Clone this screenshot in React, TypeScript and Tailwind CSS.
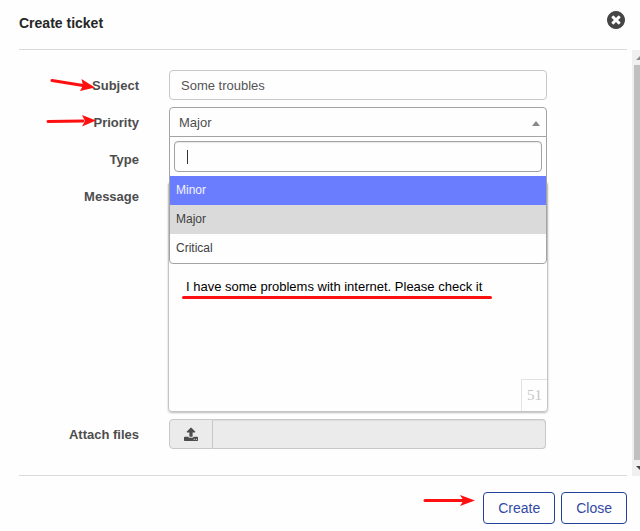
import React, { useState } from "react";

const fieldRow = "relative grid grid-cols-[120px_minmax(0,1fr)] gap-x-[30px]";
const fieldLabel = "pt-[6px] text-right text-[13px] leading-5 font-bold text-[#4d4d4d]";

function CloseIcon() {
  return (
    <svg viewBox="0 0 1536 1536" className="size-[18px] fill-[#454545]" aria-hidden="true">
      <path d="M1149 994q0-26-19-45L949 768l181-181q19-19 19-45 0-27-19-46l-90-90q-19-19-46-19-26 0-45 19L768 587 587 406q-19-19-45-19-27 0-46 19l-90 90q-19 19-19 46 0 26 19 45l181 181-181 181q-19 19-19 45 0 27 19 46l90 90q19 19 46 19 26 0 45-19l181-181 181 181q19 19 45 19 27 0 46-19l90-90q19-19 19-46zm387-226q0 209-103 385.500T1153.500 1433 768 1536t-385.500-103T103 1153.500 0 768t103-385.500T382.500 103 768 0t385.500 103T1433 382.500 1536 768z" />
    </svg>
  );
}

function UploadIcon() {
  return (
    <svg viewBox="0 0 1664 1664" className="size-[14px] fill-[#4d4d4d]" aria-hidden="true">
      <path d="M1280 1472q0-26-19-45t-45-19-45 19-19 45 19 45 45 19 45-19 19-45zm256 0q0-26-19-45t-45-19-45 19-19 45 19 45 45 19 45-19 19-45zm128-224v320q0 40-28 68t-68 28h-1472q-40 0-68-28t-28-68v-320q0-40 28-68t68-28h427q21 56 70.500 92t110.500 36h256q61 0 110.500-36t70.500-92h427q40 0 68 28t28 68zm-325-648q-17 40-59 40h-256v448q0 26-19 45t-45 19h-256q-26 0-45-19t-19-45v-448h-256q-42 0-59-40-17-39 14-69l448-448q18-19 45-19t45 19l448 448q31 30 14 69z" />
    </svg>
  );
}

/* Red pointer used to call out a control. */
function Arrow({ line, head, className }: { line: string; head: string; className: string }) {
  return (
    <svg width="56" height="20" viewBox="0 0 56 20" className={className} aria-hidden="true">
      <path d={line} stroke="#ff1010" strokeWidth="3" strokeLinecap="round" fill="none" />
      <path d={head} fill="#ff1010" />
    </svg>
  );
}

function PrioritySelect() {
  const [query, setQuery] = useState("");
  return (
    <div className="relative">
      <button
        type="button"
        id="priority"
        role="combobox"
        aria-expanded="true"
        aria-controls="priority-list"
        className="flex h-[30px] w-full items-center justify-between rounded-t border border-[#a3a3a3] pt-0.5 pr-[6px] pl-[9px] text-[13px] text-[#4d4d4d]"
      >
        Major
        <svg width="8" height="5" viewBox="0 0 8 5" className="fill-[#888]" aria-hidden="true">
          <path d="M4 0 8 5H0z" />
        </svg>
      </button>
      <div className="absolute inset-x-0 top-[29px] z-10 rounded-b border border-[#a3a3a3] bg-[#fefefe]">
        <div className="p-1">
          <div className="flex h-[31px] items-center rounded border border-[#a3a3a3] pl-3 shadow-[inset_0_1px_1px_#e8e8e8]">
            <span className="h-[14px] w-px bg-[#333]" />
            <input
              type="search"
              aria-label="Search priority"
              value={query}
              onChange={(e) => setQuery(e.target.value)}
              className="min-w-0 flex-1 bg-transparent text-[13px] caret-transparent outline-none"
            />
          </div>
        </div>
        <ul id="priority-list" role="listbox" className="text-[12px] leading-[29px] text-[#404040]">
          <li role="option" aria-selected="false" className="bg-[#6a7dff] px-1.5 text-[#f4f4ff]">Minor</li>
          <li role="option" aria-selected="true" className="bg-[#dadada] px-1.5">Major</li>
          <li role="option" aria-selected="false" className="px-1.5">Critical</li>
        </ul>
      </div>
    </div>
  );
}

function ScrollTrack() {
  return (
    <div className="flex w-2 flex-col overflow-hidden bg-[#f0f0f0]" aria-hidden="true">
      <svg width="8" height="15" viewBox="0 0 8 15" className="fill-[#8c8c8c]">
        <path d="M4 10 8 6v4z" />
      </svg>
      <div className="ml-0.5 flex-1 bg-[#c0c0c0]" />
      <svg width="8" height="16" viewBox="0 0 8 16" className="fill-[#454545]">
        <path d="M4 6h4v4z" />
      </svg>
    </div>
  );
}

export default function App() {
  const [subject, setSubject] = useState("Some troubles");
  const [message, setMessage] = useState("I have some problems with internet. Please check it");
  return (
    <div className="min-h-screen bg-[#fefefe] font-['Liberation_Sans',Arial,sans-serif]">
      <header className="mr-[13px] ml-[19px] flex h-[50px] items-start justify-between border-b border-[#dadada]">
        <h1 className="pt-[13px] text-[14px] leading-5 font-bold text-[#262626]">Create ticket</h1>
        <button type="button" aria-label="Close dialog" className="mt-[11px] mr-[2px]">
          <CloseIcon />
        </button>
      </header>

      <div className="flex">
        <form className="mr-[5px] ml-[19px] flex min-w-0 flex-1 flex-col gap-[7px] border-b border-[#dadada] pt-5 pr-20 pb-[26px]">
          <div className={fieldRow}>
            <label htmlFor="subject" className={fieldLabel}>Subject</label>
            <input
              id="subject"
              type="text"
              value={subject}
              onChange={(e) => setSubject(e.target.value)}
              className="h-[30px] rounded border border-[#c8c8c8] px-[11px] text-[13px] text-[#555] outline-none"
            />
            <Arrow className="absolute top-[6px] left-[30px]" line="M3 4.500 34 9.500" head="M46 11.500 31 15 34 9.500 32.500 3z" />
          </div>

          <div className={fieldRow}>
            <label htmlFor="priority" className={fieldLabel}>Priority</label>
            <PrioritySelect />
            <Arrow className="absolute top-[4px] left-[26px]" line="M3 10.500 38 10" head="M51 9.500 37 15.500 40 10 37 4z" />
          </div>

          <div className={fieldRow}>
            <label htmlFor="type" className={fieldLabel}>Type</label>
            <select id="type" className="h-[30px] appearance-none rounded border border-[#c8c8c8]" />
          </div>

          <div className={fieldRow}>
            <label htmlFor="message" className={fieldLabel}>Message</label>
            <div className="relative -mx-px flex rounded border border-[#c4c4c4] shadow-[0_1px_2px_#bbb]">
              <textarea
                id="message"
                value={message}
                onChange={(e) => setMessage(e.target.value)}
                className="h-[229px] w-full resize-none px-[17px] pt-[95px] text-[13px] leading-5 text-black outline-none"
              />
              <span className="absolute right-0 bottom-0 flex h-8 w-[26px] items-center justify-center border-t border-l border-[#e2e2e2] font-['Liberation_Serif',serif] text-[15px] text-[#c6c6c6]">
                {message.length}
              </span>
              <span className="absolute top-[114px] left-[13px] h-[3px] w-[310px] rounded-full bg-[#ff1010]" />
            </div>
          </div>

          <div className={fieldRow}>
            <label htmlFor="files" className={fieldLabel}>Attach files</label>
            <div className="mr-px flex h-[30px]">
              <button
                type="button"
                aria-label="Choose files"
                className="flex w-11 shrink-0 items-center justify-center rounded-l border border-[#c8c8c8] bg-[#ebebeb]"
              >
                <UploadIcon />
              </button>
              <input
                id="files"
                type="text"
                readOnly
                className="min-w-0 flex-1 rounded-r border border-l-0 border-[#c8c8c8] bg-[#ebebeb] px-2 text-[13px] shadow-[inset_0_1px_1px_#ddd] outline-none"
              />
            </div>
          </div>
        </form>
        <ScrollTrack />
      </div>

      <footer className="relative mr-[13px] flex justify-end gap-[6px] py-4">
        <div className="relative">
          <Arrow className="absolute top-0 right-[78px]" line="M4 8.500 44 8.500" head="M54 8.500 39 14 42.500 8.500 39 3z" />
          <button type="button" className="h-8 rounded border border-[#22429a] px-[14px] text-[14px] text-[#3349a5]">
            Create
          </button>
        </div>
        <button type="button" className="h-8 rounded border border-[#22429a] px-[14px] text-[14px] text-[#3349a5]">
          Close
        </button>
      </footer>
    </div>
  );
}
